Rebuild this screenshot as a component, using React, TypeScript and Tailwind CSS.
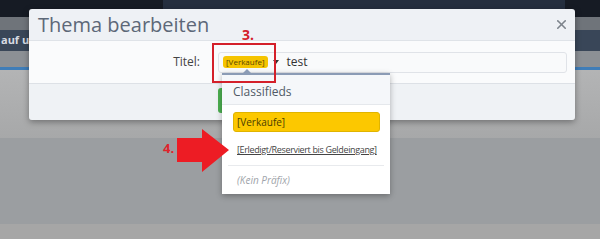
import { X } from 'lucide-react';

const font = { fontFamily: '"Open Sans", "Noto Sans", sans-serif' };

function Backdrop() {
  return (
    <div className="flex h-full flex-col">
      {/* Top nav */}
      <div className="flex h-[17px]">
        <div className="w-[163px] bg-[#161b24]" />
        <div className="flex-1 bg-[#252f3f]" />
        <div className="w-[35px] bg-[#161b24]" />
      </div>
      <div className="h-[13px] bg-[#6f747a]" />
      <div className="flex h-[21px] items-center bg-[#394658] pl-[1px]">
        <span className="text-[11px] font-bold text-[#d6dbe2]">auf unt</span>
      </div>
      <div className="h-[16px] bg-[#8c9095]" />
      <div className="h-[3px] bg-[#3f7db8]" />
      <div className="h-[68px] bg-gradient-to-b from-[#b3b4b5] to-[#a7a8a9]" />
      <div className="h-[86px] bg-[#9b9ea1]" />
      <div className="flex-1 bg-[#a6a6a6]" />
    </div>
  );
}

function Modal() {
  return (
    <div className="absolute left-[29px] top-[9px] flex h-[111px] w-[546px] flex-col overflow-hidden rounded-[3px] shadow-[0_2px_6px_rgba(0,0,0,0.35)]">
      {/* Header */}
      <div className="flex h-[32px] shrink-0 items-center justify-between border-b border-[#dfe3e8] bg-[#eef1f5] pl-[9px] pr-[6px]">
        <span className="text-[20px] leading-none text-[#5d6878]">Thema bearbeiten</span>
        <X className="h-[15px] w-[15px] text-[#7d848c]" strokeWidth={2.6} />
      </div>

      {/* Body */}
      <div className="flex h-[43px] shrink-0 items-center border-b border-[#dde1e6] bg-[#fafbfc] pr-[8px]">
        <div className="w-[171px] text-right text-[12px] text-[#444]">Titel:</div>
        <div className="ml-[18px] flex h-[21px] flex-1 items-center rounded-[3px] border border-[#e0e3e8] bg-[#f9fafb] pl-[4px]">
          <span className="flex h-[12px] items-center rounded-[3px] bg-[#f5c400] px-[3px] text-[8px] leading-none text-[#5a4500]">
            [Verkaufe]
          </span>
          <span className="ml-[5px] h-0 w-0 border-x-[3px] border-t-[4px] border-x-transparent border-t-[#333]" />
          <span className="ml-[8px] text-[12px] text-[#333]">test</span>
        </div>
      </div>

      {/* Footer */}
      <div className="flex-1 bg-[#eff2f5] pl-[189px] pt-[4px]">
        <div className="h-[25px] w-[70px] rounded-[3px] bg-[#4caf50]" />
      </div>
    </div>
  );
}

function Dropdown() {
  return (
    <div className="absolute left-[222px] top-[73px] flex h-[121px] w-[168px] flex-col border-t-2 border-[#8b9bb5] bg-white shadow-[0_2px_6px_rgba(0,0,0,0.3)]">
      <span className="absolute -top-[6px] left-[21px] h-0 w-0 border-x-[4px] border-b-[4px] border-x-transparent border-b-[#8b9bb5]" />
      <div className="flex h-[30px] shrink-0 items-center border-b border-[#e5e8ec] bg-[#f5f7fa] pl-[11px] pt-[4px] text-[12px] text-[#505a66]">
        Classifieds
      </div>
      <div className="ml-[11px] mt-[7px] flex h-[20px] w-[147px] shrink-0 items-center rounded-[3px] border border-[#e0b400] bg-[#fcc800] pl-[3px] text-[10px] text-[#4a3d00]">
        [Verkaufe]
      </div>
      <div className="mt-[11px] shrink-0 whitespace-nowrap pl-[15px] text-[9px] tracking-[-0.35px] text-[#444] underline">
        [Erledigt/Reserviert bis Geldeingang]
      </div>
      <div className="mx-[6px] mt-[8px] shrink-0 border-t border-[#e8eaed]" />
      <div className="mt-[7px] shrink-0 pl-[15px] text-[10px] italic text-[#a0a4aa]">(Kein Präfix)</div>
    </div>
  );
}

export default function App() {
  return (
    <div className="relative h-[239px] w-[600px] overflow-hidden" style={font}>
      <Backdrop />
      <Modal />
      <Dropdown />

      {/* Annotations */}
      <div className="absolute left-[212px] top-[43px] h-[40px] w-[64px] border-2 border-[#d4202a]" />
      <span className="absolute left-[242px] top-[24px] text-[14px] font-bold text-[#d4202a]">3.</span>
      <span className="absolute left-[163px] top-[139px] text-[13px] font-bold text-[#e0232b]">4.</span>
      <svg className="absolute left-0 top-0" width="600" height="239">
        <polygon points="177,138 202,138 202,129 229,150 202,172 202,162 177,162" fill="#ed1c24" />
      </svg>
    </div>
  );
}
